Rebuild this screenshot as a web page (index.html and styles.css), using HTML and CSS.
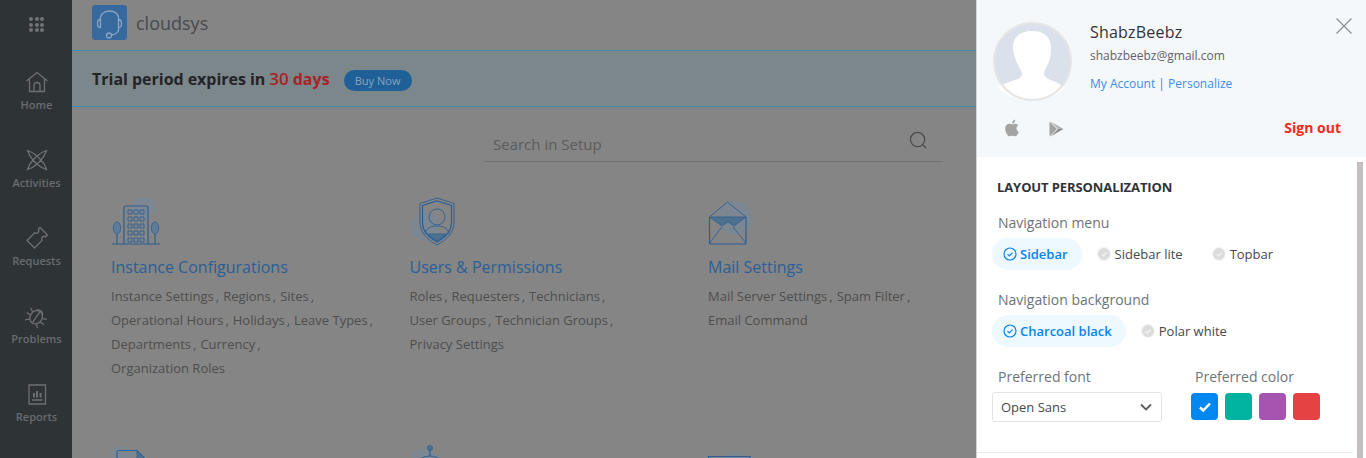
FILE: index.html
```html
<!DOCTYPE html>
<html lang="en">
<head>
<meta charset="utf-8">
<title>Setup</title>
<link rel="stylesheet" href="styles.css">
</head>
<body>
<div class="app">
  <nav class="sidebar">
    <div class="apps">
      <i></i><i></i><i></i><i></i><i></i><i></i><i></i><i></i><i></i>
    </div>
    <a class="nav-item">
      <svg class="nav-icon" viewBox="0 0 24 24"><path d="M1.500 11 12 2.500 22.500 11M4.500 9v12.500h15V9M9 21.500v-6a3 3 0 0 1 6 0v6"/></svg>
      <span>Home</span>
    </a>
    <a class="nav-item">
      <svg class="nav-icon" viewBox="0 0 24 24"><path d="M2.500 2.500C7 4 10 6 12 8c2-2 5-4 9.500-5.500C20 7 18 10 16 12c2 2 4 5 5.500 9.500C17 20 14 18 12 16c-2 2-5 4-9.500 5.500C4 17 6 14 8 12 6 10 4 7 2.500 2.500zM12 8l4 4-4 4-4-4z"/></svg>
      <span>Activities</span>
    </a>
    <a class="nav-item">
      <svg class="nav-icon" viewBox="0 0 24 24"><path d="M2 14.500 9.800 6.700a2.500 2.500 0 0 0 3.500-3.500L15 1.500 22.500 9l-1.800 1.800a2.500 2.500 0 0 0-3.500 3.500L9.500 22z"/></svg>
      <span>Requests</span>
    </a>
    <a class="nav-item">
      <svg class="nav-icon" viewBox="0 0 24 24"><g transform="rotate(35 12 12)"><ellipse cx="12" cy="13.500" rx="6" ry="7"/><path d="M8 8a4.500 4.500 0 0 1 8 0M6 11 2 9M6 15H1.500M18 11l4-2M18 15h4.500M7.500 19l-3 3M16.500 19l3 3M12 7v13"/></g></svg>
      <span>Problems</span>
    </a>
    <a class="nav-item">
      <svg class="nav-icon" viewBox="0 0 24 24"><path d="M4 3h16.500v19H4zM7 18h10.500"/><path class="bars" d="M9 11v4.500M12 9v6.500M15.500 11v4.500"/></svg>
      <span>Reports</span>
    </a>
  </nav>

  <main class="main">
    <header class="topbar">
      <div class="logo">
        <svg viewBox="0 0 35 35"><path d="M8 16C8 9 12 6 17.500 6S27 9 27 16M8.500 14.500c-2.500 0-3 2-3 4s.5 4 3 4zM26.500 14.500c2.500 0 3 2 3 4s-.5 4-3 4zM27 22.500c0 4-3 7-7.500 7.500"/><circle cx="17" cy="30.500" r="2.500"/></svg>
      </div>
      <span class="brand">cloudsys</span>
    </header>

    <section class="trial">
      <strong>Trial period expires in <em><b>30</b> days</em></strong>
      <a class="buy">Buy Now</a>
    </section>

    <div class="search">
      <span>Search in Setup</span>
      <svg viewBox="0 0 20 20"><circle cx="9" cy="9" r="7.500"/><path d="m14.500 14.500 3.500 3.500"/></svg>
    </div>

    <section class="cards">
      <article class="card">
        <svg class="card-icon" viewBox="0 0 60 50">
          <circle class="blob" cx="33" cy="10" r="12"/>
          <path d="M13 47V10.500a1.500 1.500 0 0 1 1.500-1.500h21a1.500 1.500 0 0 1 1.500 1.500V47M1 47h48"/>
          <path class="thin" d="M17 13h4v4h-4zM23 13h4v4h-4zM29 13h4v4h-4zM17 20h4v4h-4zM23 20h4v4h-4zM29 20h4v4h-4zM17 27h4v4h-4zM23 27h4v4h-4zM29 27h4v4h-4zM17 34h4v4h-4zM23 34h4v4h-4zM29 34h4v4h-4zM17 41h4v4h-4zM23 41h4v4h-4zM29 41h4v4h-4z"/>
          <path class="tree" d="M6 25c2.500 0 3.500 3 3.500 6s-1 6-3.500 6-3.500-3-3.500-6 1-6 3.500-6zM44 25c2.500 0 3.500 3 3.500 6s-1 6-3.500 6-3.500-3-3.500-6 1-6 3.500-6z"/>
          <path d="M6 37v10M44 37v10"/>
        </svg>
        <h3>Instance Configurations</h3>
        <p><span>Instance Settings</span><span>Regions</span><span>Sites</span><br><span>Operational Hours</span><span>Holidays</span><span>Leave Types</span><br><span>Departments</span><span>Currency</span><br><span class="last">Organization Roles</span></p>
      </article>
      <article class="card">
        <svg class="card-icon" viewBox="0 0 60 50">
          <circle class="blob" cx="15" cy="29" r="14"/>
          <path class="thin" d="M27 1 44 6.500V26c0 10-8 17-17 22-9-5-17-12-17-22V6.500z"/>
          <path d="M27 4 41.500 8.500V26c0 8-6.500 14.500-14.500 19-8-4.500-14.500-11-14.500-19V8.500z"/>
          <circle class="thin" cx="27" cy="20" r="8"/>
          <path class="thin" d="M15 37c1-6 6-8 12-8s11 2 12 8"/>
          <path class="fill" d="M17 37h20l-10 7z"/>
        </svg>
        <h3>Users &amp; Permissions</h3>
        <p><span>Roles</span><span>Requesters</span><span>Technicians</span><br><span>User Groups</span><span>Technician Groups</span><br><span class="last">Privacy Settings</span></p>
      </article>
      <article class="card">
        <svg class="card-icon" viewBox="0 0 60 50">
          <circle class="blob" cx="27" cy="21" r="17"/>
          <path class="fill" d="M1.500 20h36.500L26 29l-6-4-6 4z"/>
          <path class="thin" d="M1.500 20 19.500 5 38 20M1.500 46 14 30M38 46 25 30"/>
          <path d="M1.500 20V45a2 2 0 0 0 2 2H36a2 2 0 0 0 2-2V20"/>
        </svg>
        <h3>Mail Settings</h3>
        <p><span>Mail Server Settings</span><span>Spam Filter</span><br><span class="last">Email Command</span></p>
      </article>
      <article class="card">
        <svg class="card-icon" viewBox="0 0 60 50">
          <circle class="blob" cx="11" cy="16" r="13"/>
          <path d="M6 30V9.500a2 2 0 0 1 2-2h18L38 20v10"/>
          <path class="fill" d="M26 7.500 38 20H26z"/>
        </svg>
      </article>
      <article class="card">
        <svg class="card-icon" viewBox="0 0 60 50">
          <circle class="blob" cx="15" cy="20" r="14"/>
          <circle class="fill" cx="20" cy="5" r="2.500"/>
          <path d="M20 7v6"/>
          <circle cx="20" cy="30" r="17"/>
        </svg>
      </article>
      <article class="card">
        <svg class="card-icon" viewBox="0 0 60 50">
          <circle class="blob" cx="28" cy="24" r="15"/>
          <path d="M0.500 30V13.500H42V30"/>
        </svg>
      </article>
    </section>
  </main>

  <aside class="panel">
    <div class="profile">
      <svg class="avatar" viewBox="0 0 79 79">
        <circle class="avatar-bg" cx="39.500" cy="39.500" r="38.500"/>
        <path class="avatar-fg" d="M39 9c12 0 19 6 19 17 0 5-1 12-3 16-2 4-4 6-4 10 1 4 6 6 12 8l9 5c-6 8-18 13-33 13S11 73 5 65c4-3 9-4 14-6 6-2 10-3 10-7 0-3-2-5-4-9-3-6-5-12-5-18C20 15 27 9 39 9z"/>
        <circle class="avatar-ring" cx="39.500" cy="39.500" r="38.500"/>
      </svg>
      <div class="who">
        <div class="name">ShabzBeebz</div>
        <div class="email">shabzbeebz@gmail.com</div>
        <div class="links"><a>My Account</a> | <a>Personalize</a></div>
      </div>
      <button class="close" aria-label="Close">
        <svg viewBox="0 0 16 16"><path d="m.5.500 15 15M15.500.500l-15 15"/></svg>
      </button>
      <div class="profile-foot">
        <svg class="store" viewBox="0 0 24 24"><path d="M18.710 19.500c-.83 1.240-1.710 2.450-3.050 2.470-1.340.03-1.770-.79-3.290-.79-1.530 0-2 .77-3.270.82-1.310.05-2.300-1.320-3.140-2.530C4.250 17 2.940 12.450 4.700 9.390c.87-1.520 2.430-2.480 4.120-2.510 1.280-.02 2.500.87 3.290.87.78 0 2.260-1.070 3.810-.91.650.03 2.470.26 3.640 1.980-.09.06-2.170 1.280-2.150 3.810.03 3.020 2.650 4.030 2.680 4.040-.03.07-.42 1.440-1.380 2.830M13 3.500c.73-.83 1.940-1.460 2.940-1.500.13 1.170-.34 2.350-1.040 3.190-.69.85-1.830 1.510-2.950 1.420-.15-1.150.41-2.350 1.050-3.110z"/></svg>
        <svg class="store play" viewBox="0 0 15 16"><path d="M.5.500 8 8 .5 15.500z"/><path class="p2" d="M1.500.500 14.500 8 9 8z"/><path class="p3" d="M1.500 15.500 14.500 8 9 8z"/></svg>
        <a class="signout">Sign out</a>
      </div>
    </div>

    <div class="settings">
      <h4>LAYOUT PERSONALIZATION</h4>
      <div class="label">Navigation menu</div>
      <div class="choices">
        <span class="choice on"><svg viewBox="0 0 14 14"><circle cx="7" cy="7" r="6"/><path d="m4.500 7.200 1.800 1.800 3.200-3.400"/></svg>Sidebar</span>
        <span class="choice"><svg viewBox="0 0 14 14"><circle cx="7" cy="7" r="6.500"/><path d="m4.500 7.200 1.800 1.800 3.200-3.400"/></svg>Sidebar lite</span>
        <span class="choice"><svg viewBox="0 0 14 14"><circle cx="7" cy="7" r="6.500"/><path d="m4.500 7.200 1.800 1.800 3.200-3.400"/></svg>Topbar</span>
      </div>
      <div class="label second">Navigation background</div>
      <div class="choices">
        <span class="choice on"><svg viewBox="0 0 14 14"><circle cx="7" cy="7" r="6"/><path d="m4.500 7.200 1.800 1.800 3.200-3.400"/></svg>Charcoal black</span>
        <span class="choice"><svg viewBox="0 0 14 14"><circle cx="7" cy="7" r="6.500"/><path d="m4.500 7.200 1.800 1.800 3.200-3.400"/></svg>Polar white</span>
      </div>
      <div class="prefs">
        <div class="pref-font">
          <div class="label">Preferred font</div>
          <div class="select">Open Sans<svg viewBox="0 0 12 8"><path d="m1 1.500 5 5 5-5"/></svg></div>
        </div>
        <div class="pref-color">
          <div class="label">Preferred color</div>
          <div class="swatches">
            <span class="swatch blue"><svg viewBox="0 0 14 12"><path d="m2 6.500 3.200 3L12 2.500"/></svg></span>
            <span class="swatch teal"></span>
            <span class="swatch purple"></span>
            <span class="swatch red"></span>
          </div>
        </div>
      </div>
    </div>
    <div class="scrollbar"></div>
  </aside>
</div>
</body>
</html>
```

FILE: styles.css
```css
* { box-sizing: border-box; }
html, body { margin: 0; height: 100%; overflow: hidden; }
body { font-family: "Open Sans", "Liberation Sans", sans-serif; background: #858585; color: #4d4d4d; }
a { color: inherit; text-decoration: none; }
em { font-style: normal; }

.app { display: flex; height: 458px; overflow: hidden; position: relative; }

/* sidebar */
.sidebar { width: 72px; flex: none; padding-left: 1px; background: #2e3336; display: flex; flex-direction: column; align-items: center; }
.apps { height: 53px; width: 15px; padding-top: 17px; display: grid; grid-template-columns: repeat(3, 4px); grid-auto-rows: 4px; gap: 1.500px; justify-content: center; }
.apps i { background: #6f7376; border-radius: 50%; }
.nav-item { height: 78px; width: 71px; display: flex; flex-direction: column; align-items: center; padding-top: 17px; color: #686c6e; font-size: 11px; font-weight: 600; line-height: 16px; }
.nav-icon { width: 24px; height: 24px; margin-bottom: 3px; fill: none; stroke: #6c7072; stroke-width: 1.300; }
.nav-icon .bars { stroke-width: 2; }

/* main */
.main { flex: 1; min-width: 0; overflow: hidden; }
.topbar { height: 51px; padding: 5px 0 0 20px; display: flex; gap: 9px; border-bottom: 1px solid #3b8cab; }
.logo { width: 35px; height: 35px; border-radius: 3px; background: #38699e; }
.logo svg { display: block; width: 35px; height: 35px; fill: none; stroke: #8ba5c0; stroke-width: 1.300; }
.brand { font-size: 18px; line-height: 36px; color: #484a4e; }

.trial { height: 56px; padding-left: 20px; display: flex; align-items: center; gap: 14px; background: #7b878b; border-bottom: 1px solid #3b8cab; font-size: 16px; color: #242428; }
.trial strong { font-weight: 700; word-spacing: -.2px; }
.trial em { color: #a92225; }
.trial b { font-size: 17px; font-weight: 600; }
.buy { width: 68px; height: 21px; margin-top: 3px; border-radius: 11px; background: #1f6098; color: #89a5bd; font-size: 11px; line-height: 21px; text-align: center; }

.search { width: 459px; height: 55px; margin-left: 412px; padding: 26px 15px 0 9px; display: flex; justify-content: space-between; border-bottom: 1px solid #737373; font-size: 15px; line-height: 22px; color: #5c5c5c; }
.search svg { width: 19px; height: 19px; margin-top: -2px; fill: none; stroke: #4a4a4a; stroke-width: 1.300; }

.cards { margin: 35px 0 0 39px; display: grid; grid-template-columns: repeat(3, 298.500px); grid-auto-rows: 246px; }
.card-icon { display: block; width: 60px; height: 50px; fill: none; stroke: #2b5f96; stroke-width: 1.200; }
.card-icon .thin { stroke-width: .9; }
.card-icon .blob { fill: #7c8792; stroke: none; }
.card-icon .fill { fill: #4f7190; stroke: #2b5f96; stroke-width: .8; }
.card-icon .tree { fill: #5f7c99; stroke: #2b5f96; stroke-width: .8; }
.card h3 { margin: 9px 0 6px; font-size: 16px; line-height: 22px; font-weight: 400; color: #2b5f96; }
.card p { margin: 0; font-size: 13px; line-height: 24px; color: #4e4e4e; white-space: nowrap; }
.card p span::after { content: ","; margin: 0 4px 0 2px; }
.card p span.last::after { content: none; }

/* drawer */
.panel { position: absolute; top: 0; right: 0; bottom: 0; width: 390px; background: #fff; border-left: 1px solid #d0d4d6; }
.profile { height: 157px; background: #f4f8fa; padding: 22px 14px 0 16px; display: grid; grid-template-columns: 79px 1fr 16px; column-gap: 18px; align-content: start; position: relative; }
.avatar { width: 79px; height: 79px; display: block; }
.avatar-bg { fill: #dae1eb; }
.avatar-fg { fill: #fff; }
.avatar-ring { fill: none; stroke: #e5e5e5; stroke-width: 2; }
.name { margin-top: -1px; font-size: 16px; line-height: 22px; letter-spacing: .2px; color: #333; }
.email { margin-top: 4px; font-size: 12px; line-height: 18px; color: #5f6367; }
.links { margin-top: 10px; font-size: 12px; line-height: 18px; color: #5a7aa0; }
.links a { color: #3c8df0; }
.close { width: 16px; height: 16px; margin-top: -4px; padding: 0; border: 0; background: none; }
.close svg { display: block; width: 16px; height: 16px; fill: none; stroke: #8a8e92; stroke-width: 1.200; }
.profile-foot { grid-column: 1 / -1; margin-top: 14px; padding-left: 9px; padding-right: 11px; display: flex; align-items: center; height: 24px; }
.store { width: 20px; height: 20px; margin-top: 2px; fill: #a3a3a3; }
.store.play { width: 15px; height: 16px; margin: 4px 0 0 27px; }
.store .p2 { fill: #b4b4b4; }
.store .p3 { fill: #8f8f8f; }
.signout { margin-left: auto; font-size: 14px; font-weight: 700; color: #f5291d; }

.settings { height: 296px; position: relative; padding: 21px 0 0 15px; color: #6b7378; }
.settings::after { content: ""; position: absolute; left: 0; right: 13px; top: 295px; border-top: 1px solid #e8e8e8; }
.settings h4 { margin: 0 0 17px 5px; font-size: 13px; line-height: 18px; font-weight: 700; letter-spacing: -.1px; color: #2f3337; }
.label { margin-left: 6px; font-size: 14px; line-height: 20px; color: #6d7478; }
.label.second { margin-top: 20px; }
.choices { margin-top: 5px; display: flex; }
.choice { height: 32px; padding: 0 14px 0 4px; margin-left: 11px; display: flex; align-items: center; gap: 4px; font-size: 13px; color: #45494d; }
.choice svg { width: 14px; height: 14px; fill: #dcdcdc; stroke: #f4f4f4; stroke-width: 1.200; }
.choice.on { margin-left: 0; padding: 0 14px 0 11px; gap: 3px; background: #eef8ff; border-radius: 16px; color: #0a84ec; font-weight: 600; }
.choice.on svg { fill: none; stroke: #0a84ec; }

.prefs { margin-top: 20px; display: flex; gap: 33px; }
.pref-font { width: 170px; }
.select { width: 170px; height: 30px; margin-top: 5px; padding: 0 9px 0 8px; display: flex; align-items: center; justify-content: space-between; border: 1px solid #e4e4e4; border-radius: 3px; font-size: 13px; color: #45494d; }
.select svg { width: 12px; height: 8px; fill: none; stroke: #5a5f63; stroke-width: 1.800; }
.pref-color { margin-left: -4px; }
.pref-color .label { margin-left: 4px; }
.swatches { margin-top: 6px; display: flex; gap: 7px; }
.swatch { width: 27px; height: 27px; border-radius: 4px; display: flex; align-items: center; justify-content: center; }
.swatch svg { width: 14px; height: 12px; fill: none; stroke: #fff; stroke-width: 2.500; }
.blue { background: #0087f0; }
.teal { background: #00b3a1; }
.purple { background: #a654b0; }
.red { background: #e54343; }

.scrollbar { position: absolute; top: 162px; right: 3px; bottom: 0; width: 6px; background: #c4c0c0; }
```
